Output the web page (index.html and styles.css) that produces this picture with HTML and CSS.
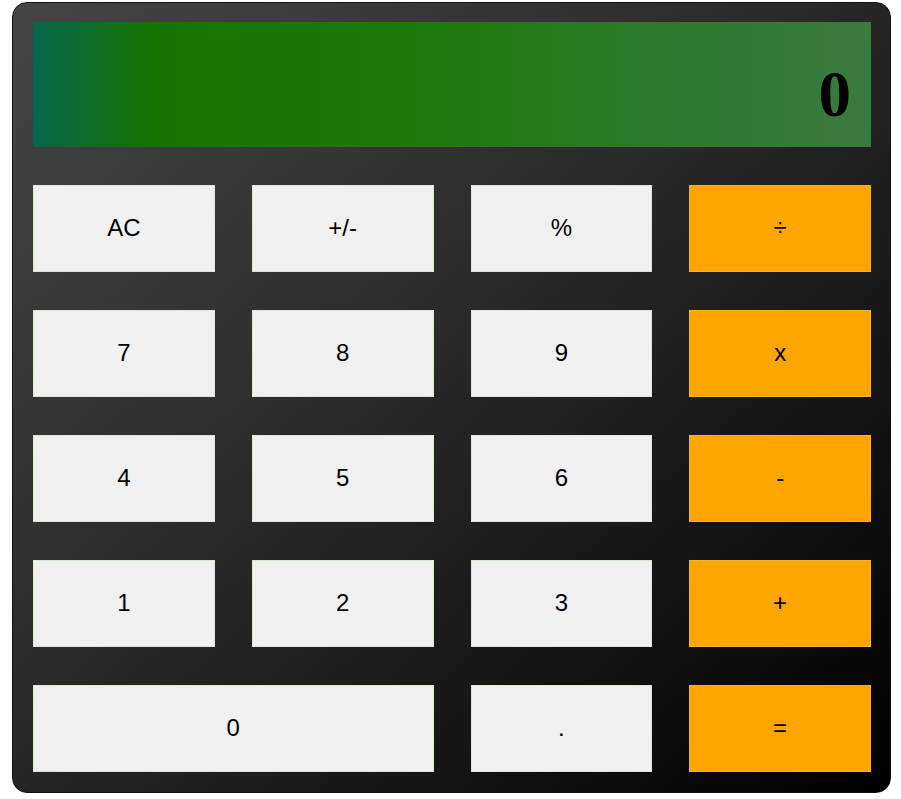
FILE: index.html
```html
<!DOCTYPE html>
<html>
<head>
<meta charset="utf-8">
<link rel="stylesheet" href="styles.css">
</head>
<body>
<div class="calc">
  <div class="display">0</div>
  <div class="keys">
    <button class="key">AC</button>
    <button class="key">+/-</button>
    <button class="key">%</button>
    <button class="key op">÷</button>
    <button class="key">7</button>
    <button class="key">8</button>
    <button class="key">9</button>
    <button class="key op">x</button>
    <button class="key">4</button>
    <button class="key">5</button>
    <button class="key">6</button>
    <button class="key op">-</button>
    <button class="key">1</button>
    <button class="key">2</button>
    <button class="key">3</button>
    <button class="key op">+</button>
    <button class="key wide">0</button>
    <button class="key">.</button>
    <button class="key op">=</button>
  </div>
</div>
</body>
</html>
```
FILE: styles.css
```css
html, body {
  margin: 0;
  padding: 0;
  background: #ffffff;
}
.calc {
  box-sizing: border-box;
  width: 879px;
  margin: 2px 0 0 12px;
  padding: 19px 19px 20px 20px;
  border: 1px solid #111;
  border-radius: 15px;
  background: linear-gradient(to bottom right, #464646 0%, #2a2a2a 45%, #000000 100%);
}
.display {
  box-sizing: border-box;
  height: 125px;
  padding: 20px 20px 0 20px;
  display: flex;
  align-items: center;
  justify-content: flex-end;
  font-family: "Liberation Serif", "Times New Roman", serif;
  font-weight: bold;
  font-size: 65px;
  color: #000;
  background: linear-gradient(to right, #08664e 0%, #137500 14%, #1d7a08 45%, #2d7a2c 75%, #3a7a40 100%);
}
.keys {
  margin-top: 38px;
  display: grid;
  grid-template-columns: repeat(4, 1fr);
  column-gap: 37px;
  row-gap: 38px;
}
.key {
  height: 87px;
  margin: 0;
  border: 1px solid #d8ecd0;
  background: #f0f0f0;
  font-family: "Liberation Sans", Arial, sans-serif;
  font-size: 24px;
  color: #000;
  padding: 0 0 2px 0;
}
.key.op {
  background: #ffa500;
  border-color: #f2b22a;
}
.key.wide {
  grid-column: span 2;
}
```
